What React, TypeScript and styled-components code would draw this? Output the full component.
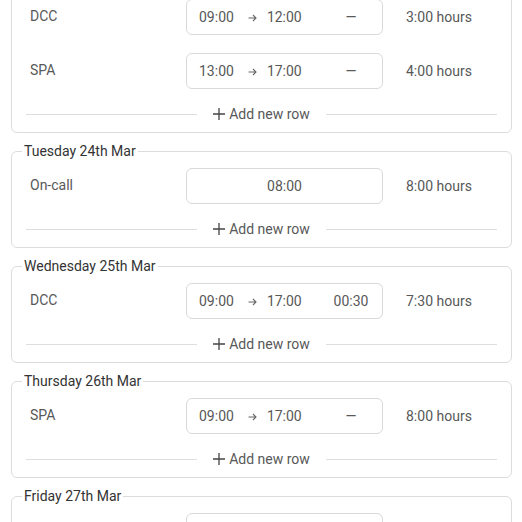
import React from 'react';
import styled, { createGlobalStyle } from 'styled-components';

const GlobalStyle = createGlobalStyle`
  html, body {
    margin: 0;
    padding: 0;
    background: #fff;
    overflow: hidden;
  }
  body {
    font-family: Roboto, "Liberation Sans", Arial, sans-serif;
    font-size: 14px;
    color: #585858;
  }
`;

const Page = styled.div`
  /* the list is scrolled a little, so the first day's heading is off the top */
  margin-top: -26px;
  padding: 0 10px 0 11px;
`;

const DayCard = styled.fieldset`
  margin: 0 0 10px;
  padding: 9px 10px 8px;
  border: 1px solid #dcdcdc;
  border-radius: 6px;
  min-width: 0;
`;

const DayTitle = styled.legend`
  padding: 0 2px;
  font-size: 14px;
  line-height: 16px;
  color: #333;
`;

const Rows = styled.div`
  display: flex;
  flex-direction: column;
  gap: 18px;
  padding: 0 4px;
`;

const EntryRow = styled.div`
  display: grid;
  grid-template-columns: 160px 197px 1fr;
  align-items: center;
`;

const Label = styled.div`
  align-self: start;
  padding: 7px 0 0 4px;
  line-height: 20px;
`;

const TimeBox = styled.div<{ $single?: boolean }>`
  box-sizing: border-box;
  height: 36px;
  border: 1px solid #d9d9d9;
  border-radius: 6px;
  display: flex;
  align-items: center;
  justify-content: ${(p) => (p.$single ? 'center' : 'flex-start')};
  padding: ${(p) => (p.$single ? '0' : '0 7px 0 12px')};
`;

const Time = styled.span`
  line-height: 20px;
`;

const Arrow = styled.span`
  display: inline-flex;
  margin: 1px 10px 0 14px;
`;

const BreakCell = styled.span`
  margin-left: auto;
  width: 48px;
  text-align: center;
`;

const Hours = styled.div`
  padding-left: 23px;
`;

const AddRow = styled.div`
  display: flex;
  align-items: center;
  margin-top: 15px;
  height: 20px;
  padding: 0 4px;
`;

const Rule = styled.div`
  flex: 1;
  height: 1px;
  background: #dedede;
`;

const AddButton = styled.button`
  display: inline-flex;
  align-items: center;
  gap: 4px;
  margin: 0 16px;
  padding: 0;
  border: none;
  background: none;
  font: inherit;
  color: #585858;
  cursor: pointer;
`;

type Entry = {
  label: string;
  start: string;
  end?: string;
  brk?: string;
  hours: string;
};

type Day = {
  title: string;
  entries: Entry[];
};

const days: Day[] = [
  {
    title: 'Monday 23rd Mar',
    entries: [
      { label: 'DCC', start: '09:00', end: '12:00', hours: '3:00 hours' },
      { label: 'SPA', start: '13:00', end: '17:00', hours: '4:00 hours' },
    ],
  },
  {
    title: 'Tuesday 24th Mar',
    entries: [{ label: 'On-call', start: '08:00', hours: '8:00 hours' }],
  },
  {
    title: 'Wednesday 25th Mar',
    entries: [{ label: 'DCC', start: '09:00', end: '17:00', brk: '00:30', hours: '7:30 hours' }],
  },
  {
    title: 'Thursday 26th Mar',
    entries: [{ label: 'SPA', start: '09:00', end: '17:00', hours: '8:00 hours' }],
  },
  {
    title: 'Friday 27th Mar',
    entries: [{ label: 'DCC', start: '09:00', end: '17:00', brk: '00:30', hours: '7:30 hours' }],
  },
];

const ArrowIcon = () => (
  <svg width="9" height="8" viewBox="0 0 9 8" fill="none" stroke="#666" strokeWidth="1.1">
    <path d="M0.5 4H8M5 1L8 4L5 7" />
  </svg>
);

const PlusIcon = () => (
  <svg width="12" height="12" viewBox="0 0 12 12" fill="none" stroke="#444" strokeWidth="1.3">
    <path d="M6 0V12M0 6H12" />
  </svg>
);

const EntryLine = ({ entry }: { entry: Entry }) => (
  <EntryRow>
    <Label>{entry.label}</Label>
    {entry.end ? (
      <TimeBox>
        <Time>{entry.start}</Time>
        <Arrow>
          <ArrowIcon />
        </Arrow>
        <Time>{entry.end}</Time>
        <BreakCell>{entry.brk ?? '—'}</BreakCell>
      </TimeBox>
    ) : (
      <TimeBox $single>
        <Time>{entry.start}</Time>
      </TimeBox>
    )}
    <Hours>{entry.hours}</Hours>
  </EntryRow>
);

export default function App() {
  return (
    <>
      <GlobalStyle />
      <Page>
        {days.map((day) => (
          <DayCard key={day.title}>
            <DayTitle>{day.title}</DayTitle>
            <Rows>
              {day.entries.map((entry, i) => (
                <EntryLine key={i} entry={entry} />
              ))}
            </Rows>
            <AddRow>
              <Rule />
              <AddButton type="button">
                <PlusIcon />
                Add new row
              </AddButton>
              <Rule />
            </AddRow>
          </DayCard>
        ))}
      </Page>
    </>
  );
}
